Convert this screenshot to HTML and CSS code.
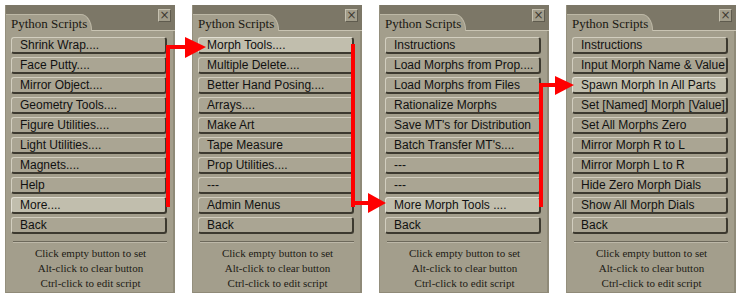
FILE: index.html
```html
<!DOCTYPE html>
<html lang="en">
<head>
    <meta charset="UTF-8">
    <title>Python Scripts Menus</title>
    <link rel="stylesheet" href="styles.css">
</head>
<body>
    <div class="panels">
        <div class="panel">
            <div class="panel-head">
                <div class="tab">Python Scripts</div>
                <div class="close">&times;</div>
            </div>
            <div class="buttons">
                <div class="btn">Shrink Wrap....</div>
                <div class="btn">Face Putty....</div>
                <div class="btn">Mirror Object....</div>
                <div class="btn">Geometry Tools....</div>
                <div class="btn">Figure Utilities....</div>
                <div class="btn">Light Utilities....</div>
                <div class="btn">Magnets....</div>
                <div class="btn">Help</div>
                <div class="btn active">More....</div>
                <div class="btn">Back</div>
            </div>
            <div class="sep"></div>
            <div class="hint">
                <p>Click empty button to set</p>
                <p>Alt-click to clear button</p>
                <p>Ctrl-click to edit script</p>
            </div>
        </div>

        <div class="panel">
            <div class="panel-head">
                <div class="tab">Python Scripts</div>
                <div class="close">&times;</div>
            </div>
            <div class="buttons">
                <div class="btn active">Morph Tools....</div>
                <div class="btn">Multiple Delete....</div>
                <div class="btn">Better Hand Posing....</div>
                <div class="btn">Arrays....</div>
                <div class="btn">Make Art</div>
                <div class="btn">Tape Measure</div>
                <div class="btn">Prop Utilities....</div>
                <div class="btn">---</div>
                <div class="btn">Admin Menus</div>
                <div class="btn">Back</div>
            </div>
            <div class="sep"></div>
            <div class="hint">
                <p>Click empty button to set</p>
                <p>Alt-click to clear button</p>
                <p>Ctrl-click to edit script</p>
            </div>
        </div>

        <div class="panel">
            <div class="panel-head">
                <div class="tab">Python Scripts</div>
                <div class="close">&times;</div>
            </div>
            <div class="buttons">
                <div class="btn">Instructions</div>
                <div class="btn">Load Morphs from Prop....</div>
                <div class="btn">Load Morphs from Files</div>
                <div class="btn">Rationalize Morphs</div>
                <div class="btn">Save MT's for Distribution</div>
                <div class="btn">Batch Transfer MT's....</div>
                <div class="btn">---</div>
                <div class="btn">---</div>
                <div class="btn active">More Morph Tools ....</div>
                <div class="btn">Back</div>
            </div>
            <div class="sep"></div>
            <div class="hint">
                <p>Click empty button to set</p>
                <p>Alt-click to clear button</p>
                <p>Ctrl-click to edit script</p>
            </div>
        </div>

        <div class="panel">
            <div class="panel-head">
                <div class="tab">Python Scripts</div>
                <div class="close">&times;</div>
            </div>
            <div class="buttons">
                <div class="btn">Instructions</div>
                <div class="btn">Input Morph Name &amp; Value</div>
                <div class="btn active">Spawn Morph In All Parts</div>
                <div class="btn">Set [Named] Morph [Value]</div>
                <div class="btn">Set All Morphs Zero</div>
                <div class="btn">Mirror Morph R to L</div>
                <div class="btn">Mirror Morph L to R</div>
                <div class="btn">Hide Zero Morph Dials</div>
                <div class="btn">Show All Morph Dials</div>
                <div class="btn">Back</div>
            </div>
            <div class="sep"></div>
            <div class="hint">
                <p>Click empty button to set</p>
                <p>Alt-click to clear button</p>
                <p>Ctrl-click to edit script</p>
            </div>
        </div>
    </div>

    <!-- red flow arrows drawn over the panels -->
    <svg class="arrows" width="744" height="304" viewBox="0 0 744 304">
        <g fill="#ff0000">
            <rect x="166" y="45" width="4" height="162"/>
            <rect x="166" y="45" width="22" height="4"/>
            <polygon points="185,37 206,47 185,58"/>

            <rect x="351" y="44" width="4" height="163"/>
            <rect x="351" y="201" width="20" height="4"/>
            <polygon points="368,193 386,203 368,213"/>

            <rect x="539" y="83" width="4" height="124"/>
            <rect x="539" y="83" width="19" height="4"/>
            <polygon points="555,76 574,85 555,95"/>
        </g>
    </svg>
</body>
</html>
```

FILE: styles.css
```css
body {
    margin: 0;
    background: #ffffff;
    position: relative;
    width: 744px;
    height: 304px;
    overflow: hidden;
}
.panels {
    display: flex;
    gap: 17px;
    padding: 5px 0 0 5px;
}
.panel {
    width: 170px;
    height: 288px;
    background: #a39e8c;
    box-sizing: border-box;
    border-left: 1px solid #948f7d;
    box-shadow: inset -2px -1px 0 #8f8a78;
    display: flex;
    flex-direction: column;
}
.panel-head {
    height: 25px;
    background: #7c7767;
    border-bottom: 1px solid #c9c4b3;
    display: flex;
    justify-content: space-between;
    align-items: flex-start;
}
.tab {
    align-self: flex-end;
    width: 86px;
    height: 17px;
    margin-bottom: -1px;
    padding: 1px 0 0 5px;
    box-sizing: border-box;
    background: #a39e8c;
    border-top: 1px solid #bdb8a6;
    border-right: 1px solid #bdb8a6;
    border-top-right-radius: 11px 16px;
    font-family: "Liberation Serif", "Times New Roman", serif;
    font-size: 13px;
    line-height: 15px;
    color: #1a1812;
    white-space: nowrap;
}
.close {
    width: 13px;
    height: 13px;
    margin: 4px 4px 0 0;
    box-sizing: border-box;
    background: #a29d8b;
    border: 1px solid #5f5b4e;
    border-top-color: #c6c1b0;
    border-left-color: #c6c1b0;
    font-family: "DejaVu Sans", sans-serif;
    font-size: 12px;
    line-height: 10px;
    text-align: center;
    color: #3d3a31;
}
.buttons {
    display: flex;
    flex-direction: column;
    gap: 3px;
    margin: 6px 8px 0 5px;
}
.btn {
    height: 17px;
    box-sizing: border-box;
    padding-left: 8px;
    background: #aaa593;
    border: 1px solid #d2cebf;
    border-right: 2px solid #3c392f;
    border-bottom: 2px solid #3c392f;
    border-radius: 3px;
    font-family: "Liberation Sans", Arial, sans-serif;
    font-size: 12px;
    line-height: 15px;
    color: #111;
    white-space: nowrap;
    overflow: hidden;
}
.btn.active {
    background: #c1bead;
    border-top-color: #e2dfd3;
    border-left-color: #e2dfd3;
}
.sep {
    margin: 7px 8px 0 7px;
    border-top: 1px solid #6d695b;
    border-bottom: 1px solid #bdb8a8;
}
.hint {
    margin-top: 3px;
    font-family: "Liberation Serif", "Times New Roman", serif;
    font-size: 11px;
    line-height: 15px;
    color: #1d1b15;
    text-align: center;
}
.hint p {
    margin: 0;
}
.arrows {
    position: absolute;
    top: 0;
    left: 0;
    pointer-events: none;
}
```
